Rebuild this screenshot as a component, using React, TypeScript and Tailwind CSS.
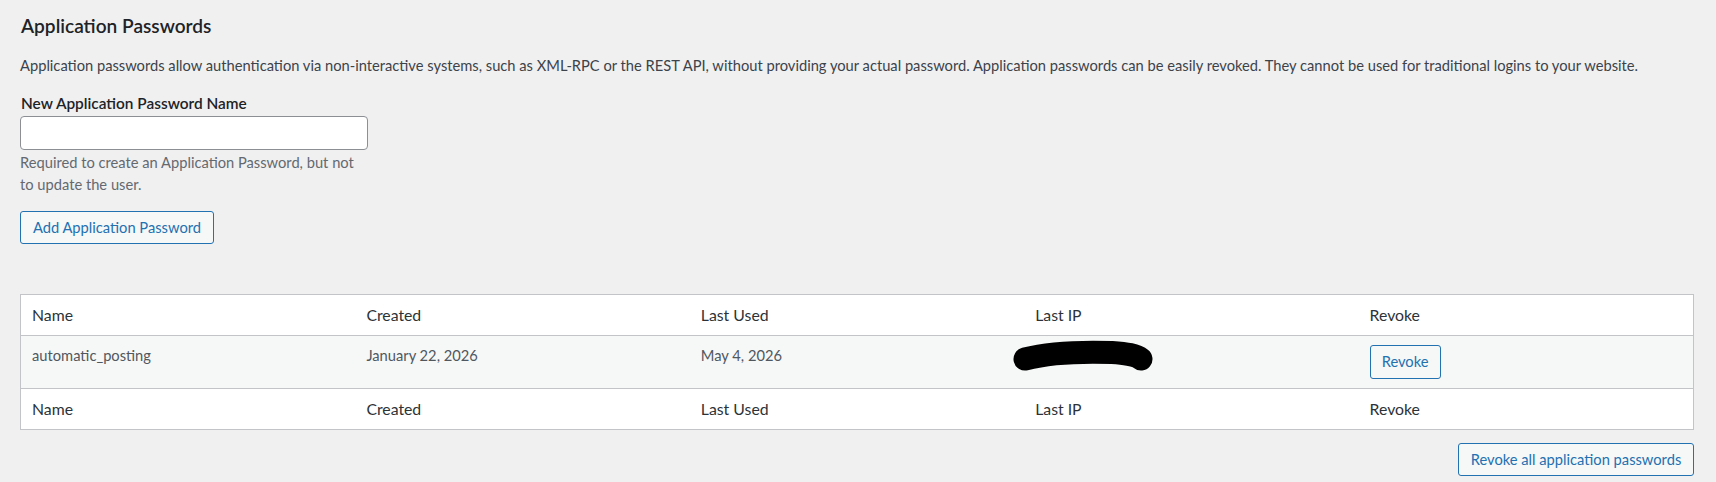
import React from "react";

const font = { fontFamily: '"Lato", "Open Sans", sans-serif' };

function Redaction() {
  return (
    <svg
      className="absolute left-[-12px] top-[-5px]"
      width="144"
      height="36"
      viewBox="0 0 144 36"
      aria-hidden="true"
    >
      <path
        d="M13 19 C 40 12, 70 11.5, 100 12.5 C 115 13.5, 124 15, 129 19"
        fill="none"
        stroke="#000"
        strokeWidth="23"
        strokeLinecap="round"
      />
    </svg>
  );
}

const columns = ["Name", "Created", "Last Used", "Last IP", "Revoke"];

function HeaderRow({ footer }: { footer?: boolean }) {
  return (
    <div
      className={
        "grid h-[41px] grid-cols-5 items-center " +
        (footer ? "border-t border-[#c3c4c7]" : "border-b border-[#c3c4c7]")
      }
    >
      {columns.map((c) => (
        <div key={c} className="px-[11px] text-[15.8px] leading-[20px] text-[#2c3338]">
          {c}
        </div>
      ))}
    </div>
  );
}

export default function App() {
  return (
    <div className="min-h-screen bg-[#f0f0f1] pl-[20px] pr-[22px] pt-[14px] pb-[6px]" style={font}>
      <h2 className="pl-px text-[19.1px] font-semibold leading-[24px] text-[#1d2327]">Application Passwords</h2>
      <p className="mt-[17px] text-[14.7px] leading-[21.5px] text-[#3c434a]">
        Application passwords allow authentication via non-interactive systems, such as XML-RPC or the REST API, without
        providing your actual password. Application passwords can be easily revoked. They cannot be used for traditional
        logins to your website.
      </p>

      <div className="mt-[15px] w-[348px]">
        <label
          htmlFor="new_application_password_name"
          className="block pl-px text-[15.4px] font-semibold leading-[23px] text-[#1d2327]"
        >
          New Application Password Name
        </label>
        <input
          id="new_application_password_name"
          type="text"
          className="mt-[1px] block h-[34px] w-[348px] rounded-[4px] border border-[#8c8f94] bg-white px-2 text-[14.7px] text-[#2c3338] outline-none"
        />
        <p className="mt-[1.5px] w-[340px] text-[14.7px] leading-[22px] text-[#646970]">
          Required to create an Application Password, but not to update the user.
        </p>
      </div>

      <button
        type="button"
        className="mt-[15.5px] flex h-[33px] w-[194px] items-center justify-center rounded-[3px] border border-[#2271b1] bg-[#f6f7f7] text-[14.7px] leading-none text-[#2271b1]"
      >
        Add Application Password
      </button>

      <div className="mt-[50px] border border-[#c3c4c7] bg-white">
        <HeaderRow />
        <div className="grid h-[52px] grid-cols-5 items-start bg-[#f6f7f7] pt-[9px] text-[14.7px] leading-[20px] text-[#50575e]">
          <div className="px-[11px]">automatic_posting</div>
          <div className="px-[11px]">January 22, 2026</div>
          <div className="px-[11px]">May 4, 2026</div>
          <div className="relative h-[20px] px-[11px]">
            <Redaction />
          </div>
          <div className="px-[11px]">
            <button
              type="button"
              className="flex h-[34px] w-[71px] items-center justify-center rounded-[3px] border border-[#2271b1] bg-[#f6f7f7] text-[14.7px] leading-none text-[#2271b1]"
            >
              Revoke
            </button>
          </div>
        </div>
        <HeaderRow footer />
      </div>

      <div className="mt-[13px] flex justify-end">
        <button
          type="button"
          className="flex h-[33px] w-[236px] items-center justify-center rounded-[3px] border border-[#2271b1] bg-[#f6f7f7] text-[14.7px] leading-none text-[#2271b1]"
        >
          Revoke all application passwords
        </button>
      </div>
    </div>
  );
}
